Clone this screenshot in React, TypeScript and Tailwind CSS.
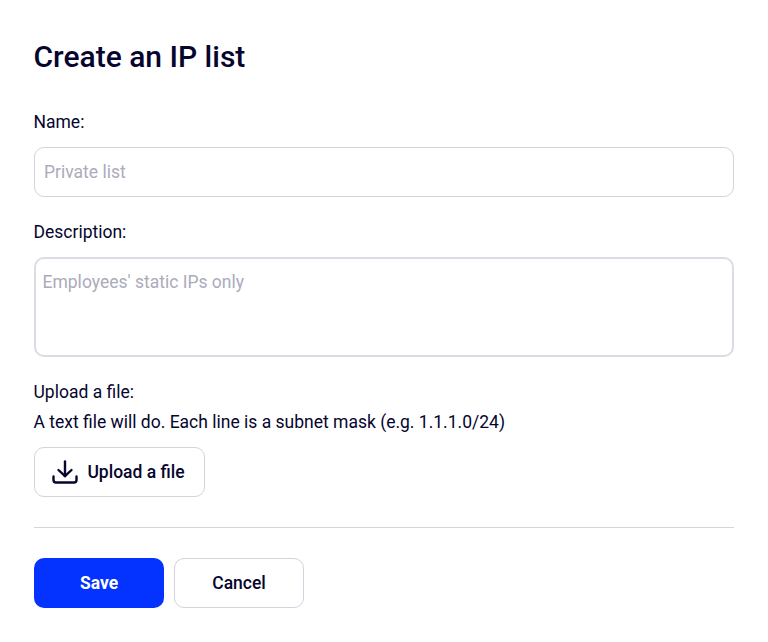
import React from 'react';

const DownloadIcon = () => (
  <svg width="26" height="24" viewBox="0 0 26 24" fill="none" stroke="#05052e" strokeWidth="2.4" strokeLinecap="round" strokeLinejoin="round">
    <path d="M13 1.5V16" />
    <path d="M6.5 10L13 16.2L19.5 10" />
    <path d="M1.5 16.5V20C1.5 21.6 2.4 22.5 4 22.5H22C23.6 22.5 24.5 21.6 24.5 20V16.5" />
  </svg>
);

export default function App() {
  return (
    <div className="w-[768px] h-[642px] bg-white px-[34px] pt-[38px] text-[#05052e] font-['Roboto',sans-serif]">
      <h1 className="text-[30px] leading-[38px] font-medium -ml-[0.5px]">Create an IP list</h1>

      <label className="block mt-[34px] -ml-[0.5px] text-[17.5px] leading-[24px]">Name:</label>
      <input
        type="text"
        placeholder="Private list"
        className="block mt-[13px] w-[700px] h-[50px] px-[9px] text-[17.5px] border border-[#d3d3de] rounded-[10px] outline-none placeholder:text-[#ababbb]"
      />

      <label className="block mt-[23px] -ml-[0.5px] text-[17.5px] leading-[24px]">Description:</label>
      <textarea
        placeholder="Employees' static IPs only"
        className="block mt-[13px] w-[700px] h-[100px] px-[6.5px] pt-[10px] pb-[8px] text-[17.5px] leading-[27px] resize-none border-2 border-[#dcdce5] rounded-[10px] outline-none placeholder:text-[#ababbb]"
      />

      <p className="mt-[23px] -ml-[0.5px] text-[17.5px] leading-[24px]">Upload a file:</p>
      <p className="mt-[6px] -ml-[0.5px] text-[17.5px] leading-[24px]">A text file will do. Each line is a subnet mask (e.g. 1.1.1.0/24)</p>

      <button className="flex items-center justify-center gap-[9px] mt-[13px] w-[171px] h-[50px] pr-[2px] bg-white border border-[#d3d3de] rounded-[10px] text-[17.5px] font-medium">
        <DownloadIcon />
        Upload a file
      </button>

      <div className="mt-[30px] w-[700px] border-t border-[#d3d3de]" />

      <div className="flex gap-[10px] mt-[30px]">
        <button className="w-[130px] h-[50px] bg-[#0433ff] rounded-[10px] text-white text-[17.5px] font-bold">Save</button>
        <button className="w-[130px] h-[50px] bg-white border border-[#d3d3de] rounded-[10px] text-[17.5px] font-medium">Cancel</button>
      </div>
    </div>
  );
}
